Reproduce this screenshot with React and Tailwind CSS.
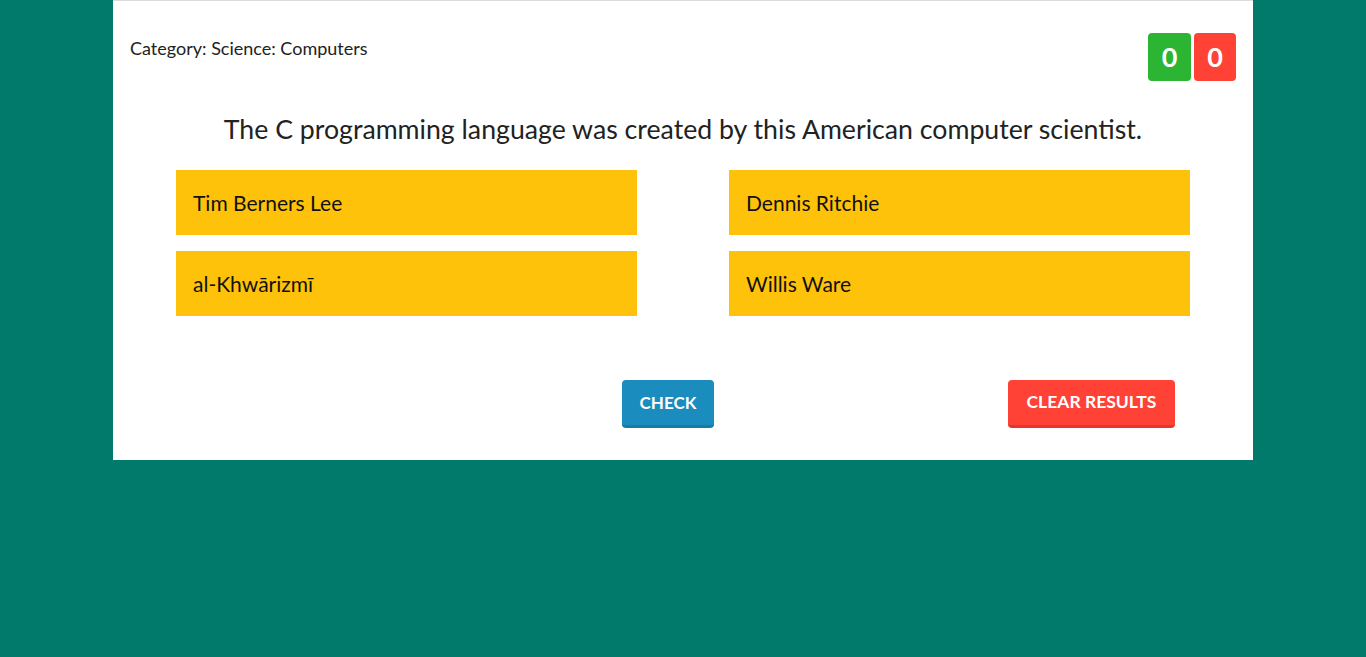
import React from "react";

const ANSWERS = ["Tim Berners Lee", "Dennis Ritchie", "al-Khwārizmī", "Willis Ware"];

export default function App() {
  return (
    <div
      className="min-h-[657px] bg-[#01796b] text-[#222]"
      style={{ fontFamily: "Lato, 'Noto Sans', sans-serif" }}
    >
      <div className="mx-[113px] bg-white border-t border-[#dcdcdc] pb-[32px]">
        {/* header: category + score */}
        <div className="flex items-start justify-between px-[17px] pt-[32px]">
          <div className="text-[18px] leading-[30px]">Category: Science: Computers</div>
          <div className="flex gap-[3px]">
            <div className="w-[43px] h-[48px] rounded-[4px] bg-[#2cb532] text-white text-[27px] font-bold flex items-center justify-center">0</div>
            <div className="w-[42px] h-[48px] rounded-[4px] bg-[#ff4136] text-white text-[27px] font-bold flex items-center justify-center">0</div>
          </div>
        </div>

        {/* question */}
        <h1 className="text-center text-[26.7px] leading-[34px] mt-[31px]">
          The C programming language was created by this American computer scientist.
        </h1>

        {/* answers */}
        <div className="mx-[63px] mt-[24px] grid grid-cols-2 gap-x-[92px] gap-y-[16px]">
          {ANSWERS.map((a) => (
            <div key={a} className="h-[65px] bg-[#fec20b] flex items-center px-[17px] text-[21px] text-[#111]">
              {a}
            </div>
          ))}
        </div>

        {/* actions */}
        <div className="mt-[64px] flex justify-between pl-[509px] pr-[78px]">
          <button className="h-[48px] w-[92px] rounded-[4px] bg-[#1a8cbd] border-b-[3px] border-[#157ca6] text-white text-[17px] font-bold uppercase">
            Check
          </button>
          <button className="h-[48px] w-[167px] rounded-[4px] bg-[#ff4136] border-b-[3px] border-[#e8352b] text-white text-[17.5px] font-bold uppercase">
            Clear Results
          </button>
        </div>
      </div>
    </div>
  );
}
